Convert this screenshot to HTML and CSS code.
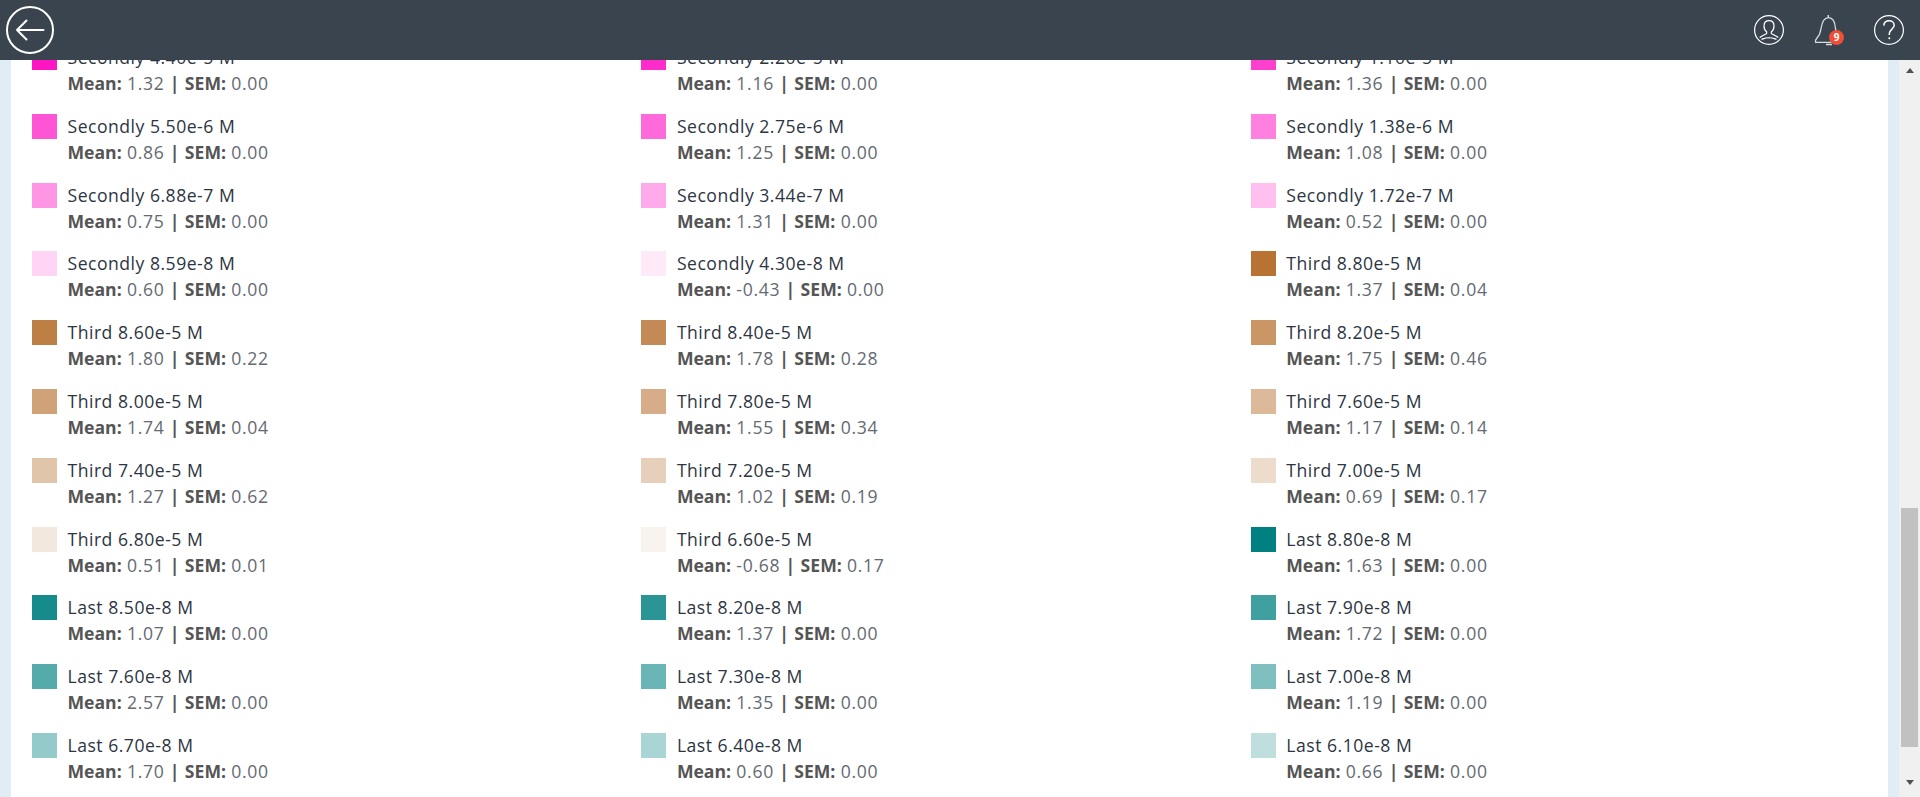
FILE: index.html
```html
<!DOCTYPE html>
<html lang="en">
<head>
  <meta charset="UTF-8">
  <meta name="viewport" content="width=device-width, initial-scale=1.0">
  <title>Results legend</title>
  <link rel="stylesheet" href="styles.css">
</head>
<body>
  <header class="topbar">
    <a class="back-button" href="#" aria-label="Back">
      <svg width="48" height="48" viewBox="0 0 48 48" fill="none" stroke="#fff">
        <circle cx="24" cy="24" r="23" stroke-width="2"/>
        <path d="M37.5 24H11M20.5 14.5L11 24l9.5 9.5" stroke-width="2" stroke-linecap="round" stroke-linejoin="round"/>
      </svg>
    </a>
    <nav class="topbar-icons">
      <a class="icon-link" href="#" aria-label="Profile">
        <svg width="32" height="32" viewBox="0 0 32 32" fill="none" stroke="#fff" stroke-width="1.2">
          <circle cx="16" cy="16" r="14.4"/>
          <path d="M16 6.6c-3 0-5 2.2-5 5.3 0 2.6 1.1 4.7 2.7 6v1.3c0 1-3.9 1.8-7 4.3M16 6.6c3 0 5 2.2 5 5.3 0 2.6-1.1 4.7-2.7 6v1.3c0 1 3.9 1.8 7 4.3M8.5 25.4c2.5-.8 5-2 7.5-1.6 2.5-.4 5 .8 7.5 1.6"/>
        </svg>
      </a>
      <a class="icon-link bell" href="#" aria-label="Notifications">
        <svg width="32" height="32" viewBox="0 0 32 32" fill="none" stroke="#d9dcdf" stroke-width="1.3">
          <path d="M2.5 28.3c-.6-1.5.3-3 1.5-4.3 2.3-2.5 3.5-5 4-9.5C9 8 11 3.6 15.5 3.6S22 8 22.5 14.5c.5 4.5 1.7 7 4 9.500 1.200 1.300 2.100 2.800 1.500 4.300z"/>
          <path d="M15.3 3.5V1M13 30.4h6" stroke-width="1.5"/>
        </svg>
        <span class="badge">9</span>
      </a>
      <a class="icon-link" href="#" aria-label="Help">
        <svg width="32" height="32" viewBox="0 0 32 32" fill="none" stroke="#fff" stroke-width="1.2">
          <circle cx="16" cy="16" r="14.4"/>
          <path d="M10.8 11.6c.2-3 2.4-4.8 5.2-4.8 3 0 5.2 1.900 5.200 4.500 0 3.600-4.600 4-4.900 8.300v1.400" stroke-width="1.5"/>
          <circle cx="16.3" cy="24.3" r="1" fill="#fff" stroke="none"/>
        </svg>
      </a>
    </nav>
  </header>

  <div class="workspace">
    <main class="panel">
      <div class="legend">
        <div class="legend-item"><span class="swatch" style="background:#ff15c4"></span><div><div class="name">Secondly 4.40e-5 M</div><div class="stats"><b>Mean:</b> 1.32 <b>|</b> <b>SEM:</b> 0.00</div></div></div>
        <div class="legend-item"><span class="swatch" style="background:#ff2bca"></span><div><div class="name">Secondly 2.20e-5 M</div><div class="stats"><b>Mean:</b> 1.16 <b>|</b> <b>SEM:</b> 0.00</div></div></div>
        <div class="legend-item"><span class="swatch" style="background:#ff40cf"></span><div><div class="name">Secondly 1.10e-5 M</div><div class="stats"><b>Mean:</b> 1.36 <b>|</b> <b>SEM:</b> 0.00</div></div></div>

        <div class="legend-item"><span class="swatch" style="background:#ff55d4"></span><div><div class="name">Secondly 5.50e-6 M</div><div class="stats"><b>Mean:</b> 0.86 <b>|</b> <b>SEM:</b> 0.00</div></div></div>
        <div class="legend-item"><span class="swatch" style="background:#ff6ada"></span><div><div class="name">Secondly 2.75e-6 M</div><div class="stats"><b>Mean:</b> 1.25 <b>|</b> <b>SEM:</b> 0.00</div></div></div>
        <div class="legend-item"><span class="swatch" style="background:#ff80df"></span><div><div class="name">Secondly 1.38e-6 M</div><div class="stats"><b>Mean:</b> 1.08 <b>|</b> <b>SEM:</b> 0.00</div></div></div>

        <div class="legend-item"><span class="swatch" style="background:#ff95e4"></span><div><div class="name">Secondly 6.88e-7 M</div><div class="stats"><b>Mean:</b> 0.75 <b>|</b> <b>SEM:</b> 0.00</div></div></div>
        <div class="legend-item"><span class="swatch" style="background:#ffaaea"></span><div><div class="name">Secondly 3.44e-7 M</div><div class="stats"><b>Mean:</b> 1.31 <b>|</b> <b>SEM:</b> 0.00</div></div></div>
        <div class="legend-item"><span class="swatch" style="background:#ffbfef"></span><div><div class="name">Secondly 1.72e-7 M</div><div class="stats"><b>Mean:</b> 0.52 <b>|</b> <b>SEM:</b> 0.00</div></div></div>

        <div class="legend-item"><span class="swatch" style="background:#ffd4f4"></span><div><div class="name">Secondly 8.59e-8 M</div><div class="stats"><b>Mean:</b> 0.60 <b>|</b> <b>SEM:</b> 0.00</div></div></div>
        <div class="legend-item"><span class="swatch" style="background:#ffeafa"></span><div><div class="name">Secondly 4.30e-8 M</div><div class="stats"><b>Mean:</b> -0.43 <b>|</b> <b>SEM:</b> 0.00</div></div></div>
        <div class="legend-item"><span class="swatch" style="background:#b87333"></span><div><div class="name">Third 8.80e-5 M</div><div class="stats"><b>Mean:</b> 1.37 <b>|</b> <b>SEM:</b> 0.04</div></div></div>

        <div class="legend-item"><span class="swatch" style="background:#be7f44"></span><div><div class="name">Third 8.60e-5 M</div><div class="stats"><b>Mean:</b> 1.80 <b>|</b> <b>SEM:</b> 0.22</div></div></div>
        <div class="legend-item"><span class="swatch" style="background:#c48a55"></span><div><div class="name">Third 8.40e-5 M</div><div class="stats"><b>Mean:</b> 1.78 <b>|</b> <b>SEM:</b> 0.28</div></div></div>
        <div class="legend-item"><span class="swatch" style="background:#ca9666"></span><div><div class="name">Third 8.20e-5 M</div><div class="stats"><b>Mean:</b> 1.75 <b>|</b> <b>SEM:</b> 0.46</div></div></div>

        <div class="legend-item"><span class="swatch" style="background:#d0a277"></span><div><div class="name">Third 8.00e-5 M</div><div class="stats"><b>Mean:</b> 1.74 <b>|</b> <b>SEM:</b> 0.04</div></div></div>
        <div class="legend-item"><span class="swatch" style="background:#d6ad88"></span><div><div class="name">Third 7.80e-5 M</div><div class="stats"><b>Mean:</b> 1.55 <b>|</b> <b>SEM:</b> 0.34</div></div></div>
        <div class="legend-item"><span class="swatch" style="background:#dcb999"></span><div><div class="name">Third 7.60e-5 M</div><div class="stats"><b>Mean:</b> 1.17 <b>|</b> <b>SEM:</b> 0.14</div></div></div>

        <div class="legend-item"><span class="swatch" style="background:#e1c5aa"></span><div><div class="name">Third 7.40e-5 M</div><div class="stats"><b>Mean:</b> 1.27 <b>|</b> <b>SEM:</b> 0.62</div></div></div>
        <div class="legend-item"><span class="swatch" style="background:#e7d0bb"></span><div><div class="name">Third 7.20e-5 M</div><div class="stats"><b>Mean:</b> 1.02 <b>|</b> <b>SEM:</b> 0.19</div></div></div>
        <div class="legend-item"><span class="swatch" style="background:#eddccc"></span><div><div class="name">Third 7.00e-5 M</div><div class="stats"><b>Mean:</b> 0.69 <b>|</b> <b>SEM:</b> 0.17</div></div></div>

        <div class="legend-item"><span class="swatch" style="background:#f3e8dd"></span><div><div class="name">Third 6.80e-5 M</div><div class="stats"><b>Mean:</b> 0.51 <b>|</b> <b>SEM:</b> 0.01</div></div></div>
        <div class="legend-item"><span class="swatch" style="background:#f9f3ee"></span><div><div class="name">Third 6.60e-5 M</div><div class="stats"><b>Mean:</b> -0.68 <b>|</b> <b>SEM:</b> 0.17</div></div></div>
        <div class="legend-item"><span class="swatch" style="background:#008080"></span><div><div class="name">Last 8.80e-8 M</div><div class="stats"><b>Mean:</b> 1.63 <b>|</b> <b>SEM:</b> 0.00</div></div></div>

        <div class="legend-item"><span class="swatch" style="background:#158b8b"></span><div><div class="name">Last 8.50e-8 M</div><div class="stats"><b>Mean:</b> 1.07 <b>|</b> <b>SEM:</b> 0.00</div></div></div>
        <div class="legend-item"><span class="swatch" style="background:#2b9595"></span><div><div class="name">Last 8.20e-8 M</div><div class="stats"><b>Mean:</b> 1.37 <b>|</b> <b>SEM:</b> 0.00</div></div></div>
        <div class="legend-item"><span class="swatch" style="background:#40a0a0"></span><div><div class="name">Last 7.90e-8 M</div><div class="stats"><b>Mean:</b> 1.72 <b>|</b> <b>SEM:</b> 0.00</div></div></div>

        <div class="legend-item"><span class="swatch" style="background:#55aaaa"></span><div><div class="name">Last 7.60e-8 M</div><div class="stats"><b>Mean:</b> 2.57 <b>|</b> <b>SEM:</b> 0.00</div></div></div>
        <div class="legend-item"><span class="swatch" style="background:#6ab5b5"></span><div><div class="name">Last 7.30e-8 M</div><div class="stats"><b>Mean:</b> 1.35 <b>|</b> <b>SEM:</b> 0.00</div></div></div>
        <div class="legend-item"><span class="swatch" style="background:#80bfbf"></span><div><div class="name">Last 7.00e-8 M</div><div class="stats"><b>Mean:</b> 1.19 <b>|</b> <b>SEM:</b> 0.00</div></div></div>

        <div class="legend-item"><span class="swatch" style="background:#95caca"></span><div><div class="name">Last 6.70e-8 M</div><div class="stats"><b>Mean:</b> 1.70 <b>|</b> <b>SEM:</b> 0.00</div></div></div>
        <div class="legend-item"><span class="swatch" style="background:#aad5d5"></span><div><div class="name">Last 6.40e-8 M</div><div class="stats"><b>Mean:</b> 0.60 <b>|</b> <b>SEM:</b> 0.00</div></div></div>
        <div class="legend-item"><span class="swatch" style="background:#bfdfdf"></span><div><div class="name">Last 6.10e-8 M</div><div class="stats"><b>Mean:</b> 0.66 <b>|</b> <b>SEM:</b> 0.00</div></div></div>
      </div>
    </main>

    <div class="scrollbar" aria-hidden="true">
      <span class="scroll-arrow up"></span>
      <span class="scroll-thumb"></span>
      <span class="scroll-arrow down"></span>
    </div>
  </div>
</body>
</html>
```

FILE: styles.css
```css
:root {
  --topbar: #39444f;
  --page-bg: #e0edf5;
  --text-name: #2c3542;
  --text-stats: #646a72;
  --text-bold: #555;
  --track: #f0f0f0;
  --thumb: #c1c1c1;
  --arrow: #505050;
}
html, body {
  margin: 0;
  padding: 0;
  height: 100%;
  overflow: hidden;
  background: var(--page-bg);
  font-family: "Open Sans", "Noto Sans", sans-serif;
  font-size: 17.6px;
}

/* TOP BAR */
.topbar {
  position: fixed;
  top: 0;
  left: 0;
  right: 0;
  height: 60px;
  z-index: 2;
  background: var(--topbar);
  display: flex;
  align-items: center;
  justify-content: space-between;
  padding: 0 15px 0 6px;
}
.back-button {
  display: flex;
}
.topbar-icons {
  display: flex;
  align-items: center;
  gap: 28px;
}
.icon-link {
  display: flex;
  position: relative;
}
.badge {
  position: absolute;
  right: 1px;
  bottom: 1px;
  width: 15px;
  height: 15px;
  border-radius: 50%;
  background: #f04e37;
  color: #fff;
  font-size: 10px;
  font-weight: 700;
  line-height: 15px;
  text-align: center;
}

/* CONTENT */
.workspace {
  display: flex;
  height: 100%;
}
.panel {
  flex: 1;
  margin: 0 11px;
  background: #fff;
  overflow: hidden;
}
.legend {
  display: grid;
  grid-template-columns: repeat(3, 609.4px);
  grid-auto-rows: 68.8px;
  padding: 45px 0 0 21px;
}
.legend-item {
  display: flex;
  gap: 10.5px;
}
.swatch {
  flex: none;
  width: 25px;
  height: 25px;
}
.name {
  color: var(--text-name);
  line-height: 24px;
  letter-spacing: .5px;
}
.stats {
  color: var(--text-stats);
  line-height: 29px;
  letter-spacing: .7px;
}
.stats b {
  color: var(--text-bold);
  font-weight: 700;
  letter-spacing: 0;
}

/* SCROLLBAR */
.scrollbar {
  flex: none;
  width: 21px;
  margin-top: 60px;
  background: var(--track);
  display: flex;
  flex-direction: column;
  align-items: center;
}
.scroll-arrow {
  width: 0;
  height: 0;
  border-left: 4.5px solid transparent;
  border-right: 4.5px solid transparent;
}
.scroll-arrow.up {
  margin-top: 8px;
  border-bottom: 5px solid var(--arrow);
}
.scroll-arrow.down {
  margin-top: 33px;
  border-top: 5px solid var(--arrow);
}
.scroll-thumb {
  width: 17px;
  height: 239px;
  margin-top: 435px;
  background: var(--thumb);
}
```
